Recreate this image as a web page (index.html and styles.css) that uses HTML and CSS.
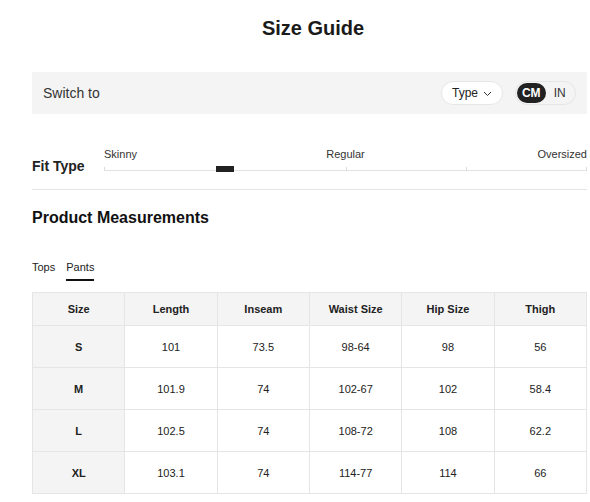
FILE: index.html
```html
<!DOCTYPE html>
<html lang="en">
<head>
<meta charset="utf-8">
<title>Size Guide</title>
<link rel="stylesheet" href="styles.css">
</head>
<body>
<div class="page">
  <h1 class="title">Size Guide</h1>

  <div class="switch-bar">
    <span class="switch-label">Switch to</span>
    <div class="switch-controls">
      <button class="type-pill">Type
        <svg class="chev" width="9" height="6" viewBox="0 0 9 6"><path d="M1 1 L4.5 4.5 L8 1" fill="none" stroke="#333" stroke-width="1"/></svg>
      </button>
      <div class="unit-toggle">
        <span class="unit active">CM</span>
        <span class="unit">IN</span>
      </div>
    </div>
  </div>

  <div class="fit">
    <div class="fit-label">Fit Type</div>
    <div class="fit-scale">
      <div class="fit-labels">
        <span class="fl-left">Skinny</span>
        <span class="fl-mid">Regular</span>
        <span class="fl-right">Oversized</span>
      </div>
      <div class="track">
        <span class="tick t0"></span>
        <span class="tick t50"></span>
        <span class="tick t75"></span>
        <span class="tick t100"></span>
        <span class="thumb"></span>
      </div>
    </div>
  </div>

  <h2 class="section-title">Product Measurements</h2>

  <div class="tabs">
    <span class="tab">Tops</span>
    <span class="tab active">Pants</span>
  </div>

  <table class="sizes">
    <thead>
      <tr><th>Size</th><th>Length</th><th>Inseam</th><th>Waist Size</th><th>Hip Size</th><th>Thigh</th></tr>
    </thead>
    <tbody>
      <tr><td class="sz">S</td><td>101</td><td>73.5</td><td>98-64</td><td>98</td><td>56</td></tr>
      <tr><td class="sz">M</td><td>101.9</td><td>74</td><td>102-67</td><td>102</td><td>58.4</td></tr>
      <tr><td class="sz">L</td><td>102.5</td><td>74</td><td>108-72</td><td>108</td><td>62.2</td></tr>
      <tr><td class="sz">XL</td><td>103.1</td><td>74</td><td>114-77</td><td>114</td><td>66</td></tr>
    </tbody>
  </table>
</div>
</body>
</html>
```

FILE: styles.css
```css
* { box-sizing: border-box; }
html, body { margin: 0; padding: 0; background: #fff; }
body {
  font-family: "Liberation Sans", Arial, sans-serif;
  color: #222;
  overflow: hidden;
}
.page {
  width: 590px;
  padding: 0 3px 0 32px;
}
.title {
  margin: 16px 0 0;
  padding-left: 7px;
  font-size: 20px;
  line-height: 24px;
  font-weight: bold;
  text-align: center;
  color: #1a1a1a;
}
.switch-bar {
  margin-top: 32px;
  height: 42px;
  background: #f4f4f4;
  display: flex;
  align-items: center;
  justify-content: space-between;
  padding: 0 11px;
}
.switch-label {
  font-size: 14px;
  color: #333;
}
.switch-controls {
  display: flex;
  align-items: center;
  gap: 12px;
}
.type-pill {
  width: 62px;
  height: 24px;
  border: 1px solid #e6e6e6;
  border-radius: 12px;
  background: #fff;
  font-family: inherit;
  font-size: 12px;
  color: #222;
  display: flex;
  align-items: center;
  justify-content: center;
  gap: 5px;
  padding: 0;
}
.chev { display: block; margin-top: 1px; }
.unit-toggle {
  width: 61px;
  height: 24px;
  border: 1px solid #e6e6e6;
  border-radius: 12px;
  background: #f4f4f4;
  display: flex;
  align-items: center;
  padding: 0 1px;
}
.unit {
  width: 29px;
  height: 20px;
  border-radius: 10px;
  font-size: 12px;
  display: flex;
  align-items: center;
  justify-content: center;
  color: #333;
}
.unit.active {
  background: #222;
  color: #fff;
  font-weight: bold;
}
.fit {
  margin-top: 34px;
  display: flex;
  align-items: flex-end;
  padding-bottom: 17px;
  border-bottom: 1px solid #e5e5e5;
}
.fit-label {
  width: 72px;
  font-size: 14px;
  line-height: 16px;
  font-weight: bold;
  margin-bottom: -2px;
}
.fit-scale {
  flex: 1;
}
.fit-labels {
  position: relative;
  height: 13px;
  font-size: 11px;
  line-height: 13px;
  color: #333;
}
.fl-left { position: absolute; left: 0; }
.fl-mid { position: absolute; left: 50%; transform: translateX(-50%); }
.fl-right { position: absolute; right: 0; }
.track {
  position: relative;
  margin-top: 5px;
  height: 6px;
}
.track::before {
  content: "";
  position: absolute;
  left: 0;
  right: 0;
  top: 4px;
  height: 1px;
  background: #e2e2e2;
}
.tick {
  position: absolute;
  top: 1px;
  width: 1px;
  height: 4px;
  background: #dcdcdc;
}
.t0 { left: 0; }
.t50 { left: 50%; }
.t75 { left: 75%; }
.t100 { right: 0; }
.thumb {
  position: absolute;
  left: 112px;
  top: 0;
  width: 18px;
  height: 6px;
  background: #222;
}
.section-title {
  margin: 18px 0 0;
  font-size: 16px;
  line-height: 20px;
  font-weight: bold;
  color: #111;
}
.tabs {
  margin-top: 33px;
  display: flex;
  gap: 11px;
}
.tab {
  font-size: 11px;
  line-height: 13px;
  padding-bottom: 5px;
  border-bottom: 2px solid transparent;
  color: #222;
}
.tab.active {
  border-bottom-color: #111;
}
.sizes {
  margin-top: 11px;
  width: 555px;
  table-layout: fixed;
  border-collapse: collapse;
  font-size: 11px;
  color: #222;
}
.sizes th, .sizes td {
  border: 1px solid #e5e5e5;
  text-align: center;
  padding: 0;
}
.sizes th {
  height: 33px;
  background: #f4f4f4;
  font-weight: bold;
}
.sizes td {
  height: 42px;
}
.sizes td.sz {
  background: #f4f4f4;
  font-weight: bold;
}
```
